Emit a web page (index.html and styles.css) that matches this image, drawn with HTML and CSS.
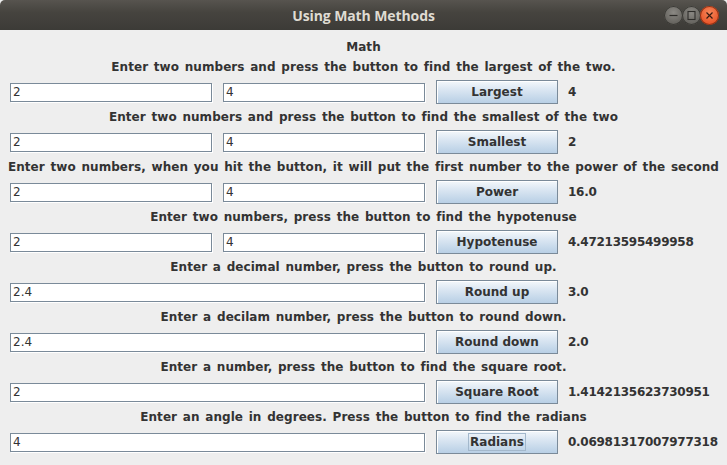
FILE: index.html
```html
<!DOCTYPE html>
<html>
<head>
<meta charset="utf-8">
<link rel="stylesheet" href="styles.css">
</head>
<body>
<div class="window">
  <div class="titlebar">
    <span class="title">Using Math Methods</span>
    <div class="controls">
      <span class="wbtn min"><svg width="19" height="19" viewBox="0 0 19 19"><line x1="5.5" y1="9.5" x2="13.5" y2="9.5" stroke="#2e2d2a" stroke-width="1.2"/></svg></span>
      <span class="wbtn max"><svg width="19" height="19" viewBox="0 0 19 19"><rect x="6" y="5.5" width="7" height="8" fill="none" stroke="#2e2d2a" stroke-width="1.1"/></svg></span>
      <span class="wbtn close"><svg width="19" height="19" viewBox="0 0 19 19"><path d="M6.5 6.5 L12.5 12.5 M12.5 6.5 L6.5 12.5" stroke="#3a1a10" stroke-width="1.2"/></svg></span>
    </div>
  </div>
  <div class="content">
    <div class="label heading">Math</div>

    <div class="label">Enter two numbers and press the button to find the largest of the two.</div>
    <div class="row">
      <input class="field" value="2"><input class="field" value="4">
      <button class="btn">Largest</button><span class="result">4</span>
    </div>

    <div class="label">Enter two numbers and press the button to find the smallest of the two</div>
    <div class="row">
      <input class="field" value="2"><input class="field" value="4">
      <button class="btn">Smallest</button><span class="result">2</span>
    </div>

    <div class="label">Enter two numbers, when you hit the button, it will put the first number to the power of the second</div>
    <div class="row">
      <input class="field" value="2"><input class="field" value="4">
      <button class="btn">Power</button><span class="result">16.0</span>
    </div>

    <div class="label">Enter two numbers, press the button to find the hypotenuse</div>
    <div class="row">
      <input class="field" value="2"><input class="field" value="4">
      <button class="btn">Hypotenuse</button><span class="result">4.47213595499958</span>
    </div>

    <div class="label">Enter a decimal number, press the button to round up.</div>
    <div class="row">
      <input class="field wide" value="2.4">
      <button class="btn">Round up</button><span class="result">3.0</span>
    </div>

    <div class="label">Enter a decilam number, press the button to round down.</div>
    <div class="row">
      <input class="field wide" value="2.4">
      <button class="btn">Round down</button><span class="result">2.0</span>
    </div>

    <div class="label">Enter a number, press the button to find the square root.</div>
    <div class="row">
      <input class="field wide" value="2">
      <button class="btn">Square Root</button><span class="result">1.4142135623730951</span>
    </div>

    <div class="label">Enter an angle in degrees. Press the button to find the radians</div>
    <div class="row">
      <input class="field wide" value="4">
      <button class="btn"><span class="focus">Radians</span></button><span class="result">0.06981317007977318</span>
    </div>
  </div>
</div>
</body>
</html>
```

FILE: styles.css
```css
html, body {
  margin: 0;
  padding: 0;
  background: #eeeeee;
}
.window {
  width: 727px;
  height: 465px;
  overflow: hidden;
  background: #eeeeee;
  font-family: "DejaVu Sans", sans-serif;
}
.titlebar {
  height: 30px;
  background: linear-gradient(#57544f, #46443f 40%, #3c3b37);
  border-radius: 5px 5px 0 0;
  display: flex;
  align-items: center;
  justify-content: center;
  position: relative;
}
.title {
  color: #dfdbd2;
  font-family: "Open Sans", "DejaVu Sans", sans-serif;
  font-weight: 700;
  font-size: 14px;
  letter-spacing: -0.1px;
}
.controls {
  position: absolute;
  right: 8px;
  top: 6px;
  display: flex;
}
.wbtn {
  width: 19px;
  height: 19px;
  border-radius: 50%;
  display: block;
  margin-left: -1px;
}
.wbtn svg { display: block; }
.wbtn.min, .wbtn.max {
  background: radial-gradient(circle at 50% 35%, #8b8984, #65635e 70%, #52504c);
  box-shadow: inset 0 0 0 1px #3a3935;
}
.wbtn.close {
  background: radial-gradient(circle at 50% 35%, #f5875a, #e9562a 70%, #c9431d);
  box-shadow: inset 0 0 0 1px #8e3216;
}
.content {
  padding-top: 8px;
  display: flex;
  flex-direction: column;
  color: #333333;
  font-size: 12px;
}
.label {
  height: 18px;
  line-height: 18px;
  text-align: center;
  font-weight: 700;
  margin-bottom: 4px;
  white-space: nowrap;
  word-spacing: 1.5px;
  letter-spacing: 0.05px;
}
.label.heading {
  margin-bottom: 2px;
}
.row {
  height: 24px;
  display: flex;
  align-items: center;
  padding-left: 10px;
  margin-bottom: 4px;
}
.field {
  box-sizing: border-box;
  width: 202px;
  height: 19px;
  margin: 0 11px 0 0;
  padding: 0 2px;
  border: 1px solid #7a8a99;
  box-shadow: 1px 1px 0 #ffffff;
  background: #ffffff;
  font-family: "DejaVu Sans", sans-serif;
  font-size: 12px;
  color: #333333;
  outline: none;
}
.field.wide {
  width: 415px;
}
.btn {
  box-sizing: border-box;
  width: 122px;
  height: 24px;
  margin: 0;
  padding: 0;
  border: 1px solid #7a8a99;
  box-shadow: inset 1px 1px 0 #ffffff;
  background: linear-gradient(#f4f8fb, #dde8f3 35%, #b8cfe5);
  font-family: "DejaVu Sans", sans-serif;
  font-weight: 700;
  font-size: 12px;
  color: #333333;
  display: flex;
  align-items: center;
  justify-content: center;
}
.focus {
  border: 1px solid #a3b8cc;
  padding: 0 1px;
  line-height: 16px;
}
.result {
  margin-left: 10px;
  font-weight: 700;
  font-size: 12px;
  color: #333333;
  white-space: nowrap;
  letter-spacing: -0.27px;
}
```
